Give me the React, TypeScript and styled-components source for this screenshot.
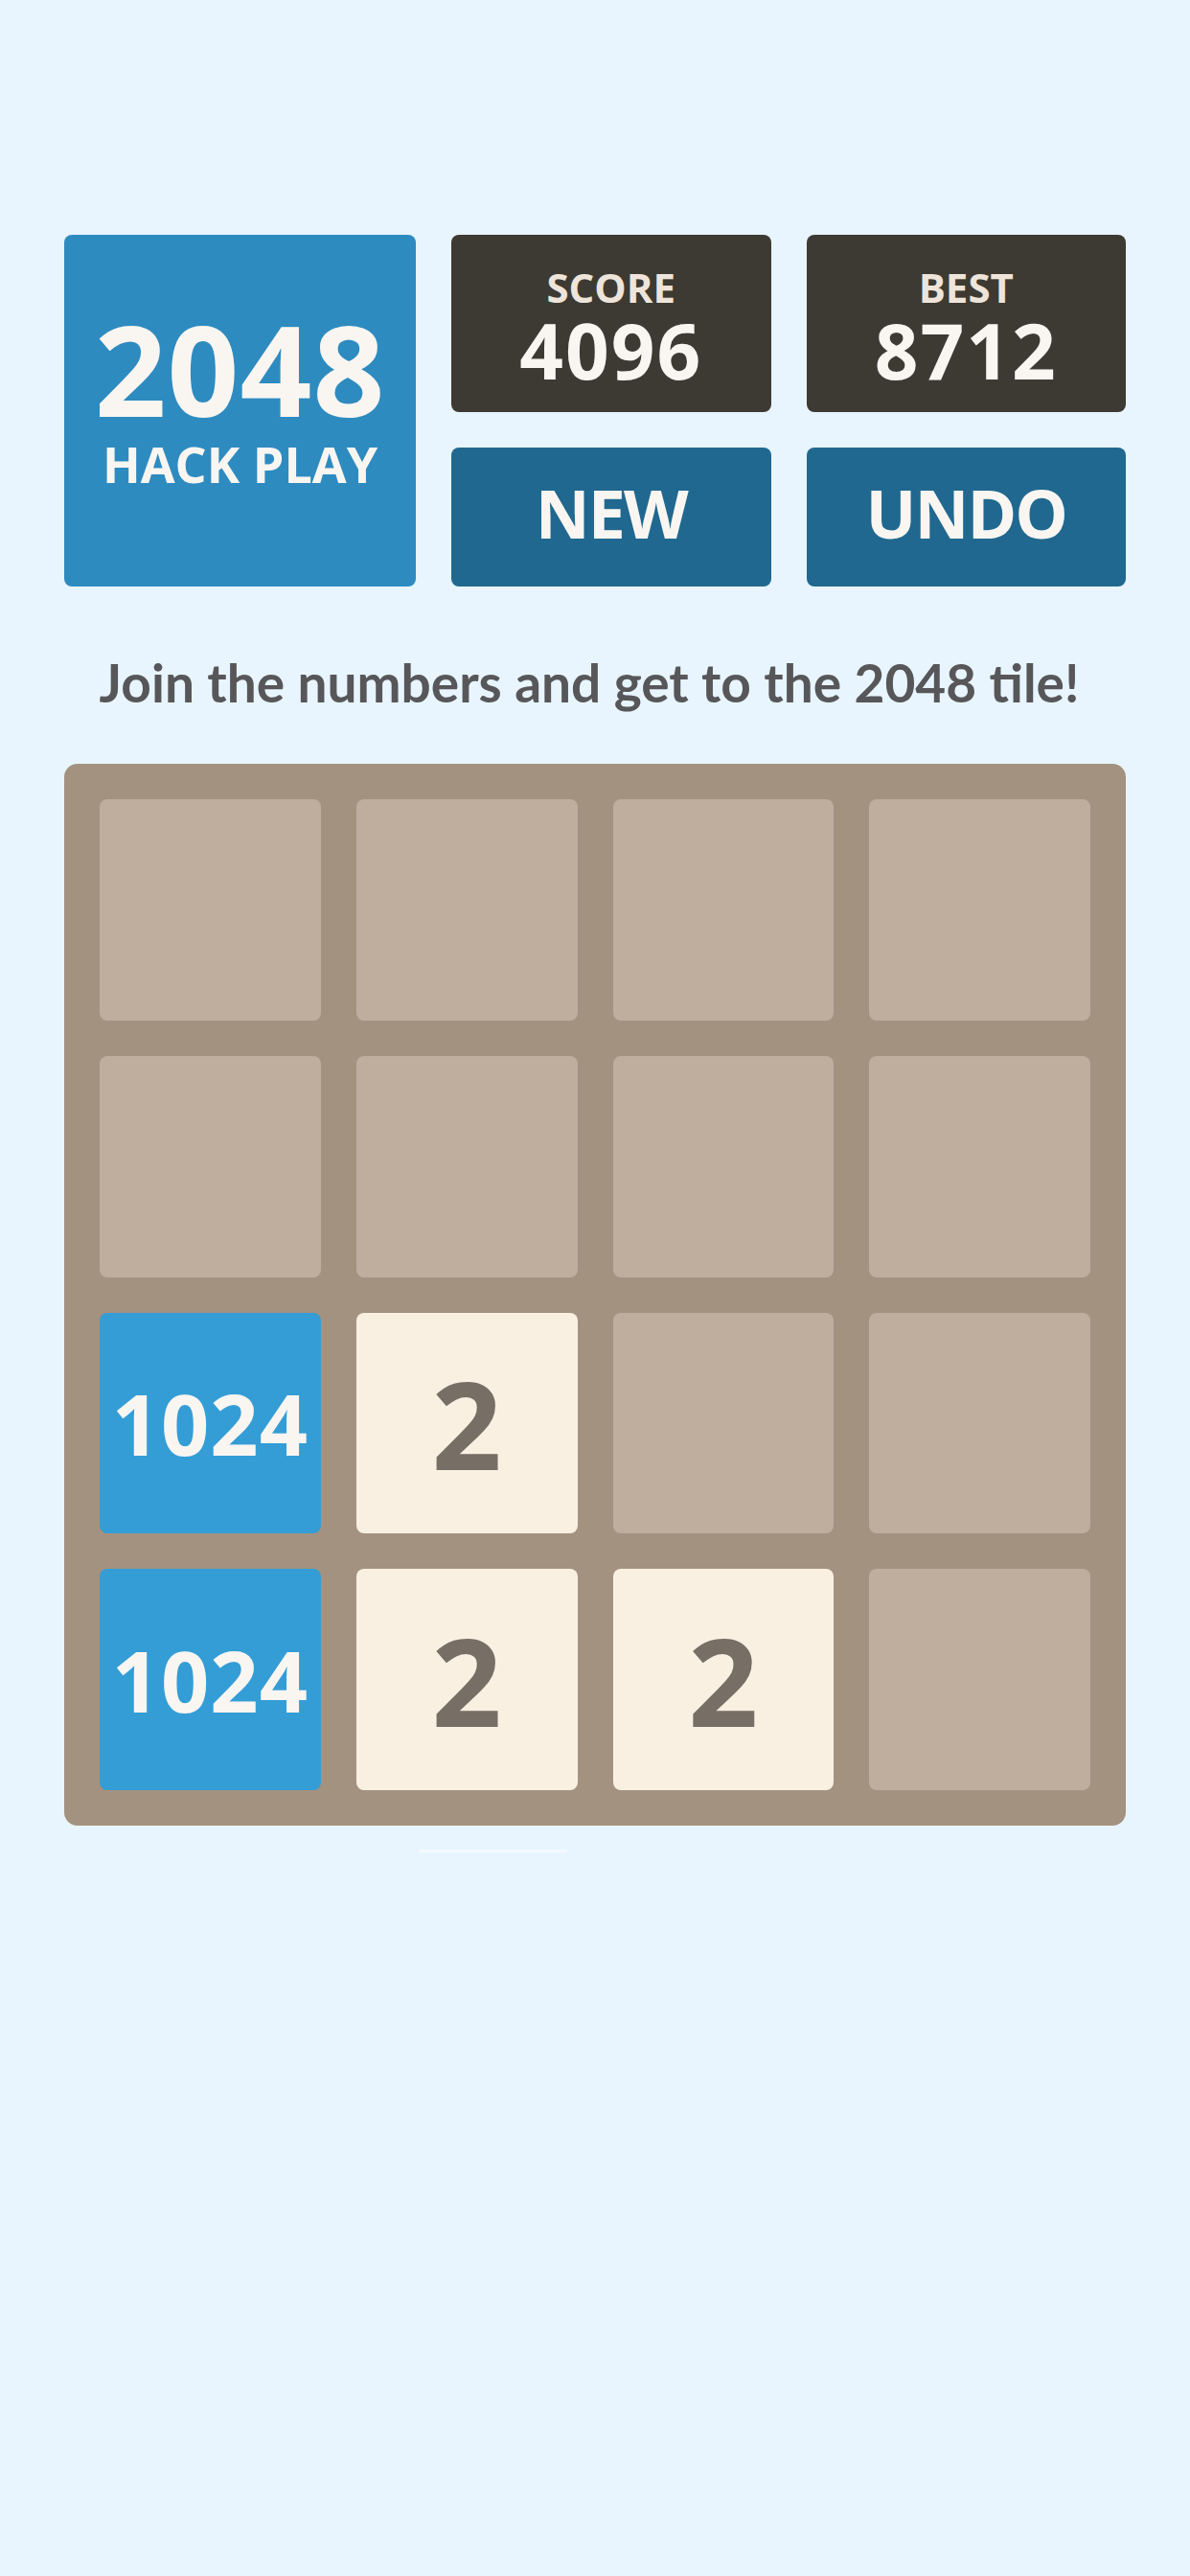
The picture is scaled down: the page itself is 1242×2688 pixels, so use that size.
import React from "react";
import styled, { createGlobalStyle } from "styled-components";

const Global = createGlobalStyle`
  html, body {
    margin: 0;
    padding: 0;
    background: #e8f5fe;
  }
  body {
    font-family: "Open Sans", "Noto Sans", sans-serif;
  }
`;

const Page = styled.div`
  min-height: 2688px;
  box-sizing: border-box;
  padding: 245px 67px 0;
  display: flex;
  flex-direction: column;
  align-items: stretch;
`;

const Header = styled.div`
  display: grid;
  grid-template-columns: 367px 1fr 1fr;
  grid-template-rows: 185px 145px;
  column-gap: 37px;
  row-gap: 37px;
`;

const Logo = styled.div`
  grid-row: 1 / span 2;
  background: #2e8bc0;
  border-radius: 8px;
  display: flex;
  flex-direction: column;
  align-items: center;
  justify-content: center;
  padding-bottom: 28px;
  box-sizing: border-box;
  color: #f9f6f2;
  font-weight: 700;
  line-height: 1;
`;

const LogoNumber = styled.div`
  font-size: 131px;
  letter-spacing: 1px;
`;

const LogoSub = styled.div`
  font-size: 52px;
  margin-top: 8px;
`;

const ScoreBox = styled.div`
  background: #3d3a33;
  border-radius: 8px;
  display: flex;
  flex-direction: column;
  align-items: center;
  justify-content: center;
  padding-top: 8px;
  box-sizing: border-box;
  font-weight: 700;
  line-height: 1;
`;

const ScoreLabel = styled.div`
  font-size: 42px;
  color: #eee4da;
`;

const ScoreValue = styled.div`
  font-size: 80px;
  color: #f9f6f2;
  margin-top: 4px;
  letter-spacing: 2px;
`;

const ActionButton = styled.button`
  border: none;
  background: #20688f;
  border-radius: 8px;
  color: #f9f6f2;
  font-family: "Open Sans", "Noto Sans", sans-serif;
  font-weight: 700;
  font-size: 70px;
  letter-spacing: -2px;
  line-height: 1;
  padding: 0 0 10px;
  display: flex;
  align-items: center;
  justify-content: center;
`;

const Intro = styled.p`
  margin: 0;
  height: 185px;
  display: flex;
  align-items: center;
  justify-content: center;
  font-family: "Lato", "Open Sans", sans-serif;
  font-weight: 700;
  font-size: 55px;
  color: #57575a;
  padding: 14px 12px 0 0;
  box-sizing: border-box;
`;

const Board = styled.div`
  background: #a39280;
  border-radius: 14px;
  padding: 37px;
  display: grid;
  grid-template-columns: repeat(4, 1fr);
  gap: 37px;
`;

type Kind = "empty" | "two" | "big";

const tileBg: Record<Kind, string> = {
  empty: "#bfae9e",
  two: "#faf0e2",
  big: "#349dd6",
};

const Tile = styled.div<{ $kind: Kind }>`
  aspect-ratio: 1;
  background: ${(p) => tileBg[p.$kind]};
  border-radius: 8px;
  display: flex;
  align-items: center;
  justify-content: center;
  font-weight: 700;
  line-height: 1;
  color: ${(p) => (p.$kind === "two" ? "#776e65" : "#f9f6f2")};
  font-size: ${(p) => (p.$kind === "two" ? "128px" : "88px")};
  letter-spacing: ${(p) => (p.$kind === "big" ? "1px" : "0")};
`;

const Divider = styled.div`
  align-self: flex-start;
  margin: 25px 0 0 370px;
  width: 155px;
  height: 3px;
  border-radius: 2px;
  background: #f3faff;
`;

const cells: (number | null)[] = [
  null, null, null, null,
  null, null, null, null,
  1024, 2, null, null,
  1024, 2, 2, null,
];

const kindOf = (v: number | null): Kind =>
  v === null ? "empty" : v === 2 ? "two" : "big";

export default function App() {
  return (
    <>
      <Global />
      <Page>
        <Header>
          <Logo>
            <LogoNumber>2048</LogoNumber>
            <LogoSub>HACK PLAY</LogoSub>
          </Logo>
          <ScoreBox>
            <ScoreLabel>SCORE</ScoreLabel>
            <ScoreValue>4096</ScoreValue>
          </ScoreBox>
          <ScoreBox>
            <ScoreLabel>BEST</ScoreLabel>
            <ScoreValue>8712</ScoreValue>
          </ScoreBox>
          <ActionButton>NEW</ActionButton>
          <ActionButton>UNDO</ActionButton>
        </Header>
        <Intro>Join the numbers and get to the 2048 tile!</Intro>
        <Board>
          {cells.map((v, i) => (
            <Tile key={i} $kind={kindOf(v)}>
              {v ?? ""}
            </Tile>
          ))}
        </Board>
        <Divider />
      </Page>
    </>
  );
}
